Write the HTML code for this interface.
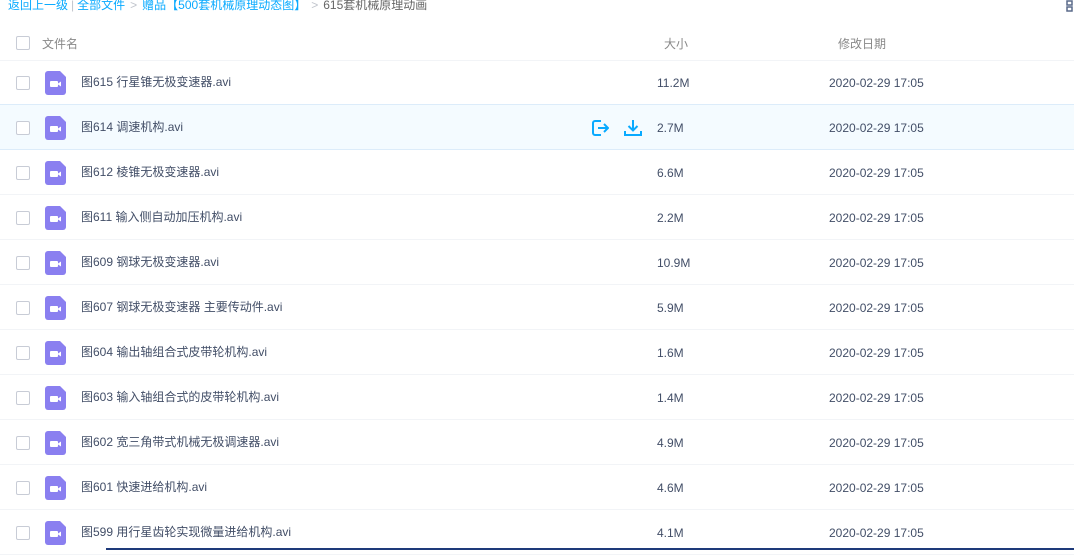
<!DOCTYPE html><html><head><meta charset="utf-8"><style>
body{margin:0;width:1074px;height:550px;overflow:hidden;background:#fff;font-family:"Liberation Sans","Noto Sans CJK SC",sans-serif;font-size:12px;color:#424e67;position:relative}
.bc{position:absolute;top:-4px;left:8px;color:#09aaff;white-space:nowrap}
.bc .g{color:#c0c4cc;margin:0 5px}.bc .d{color:#666}
.hdr{position:absolute;top:22px;left:0;width:1074px;height:38px;border-bottom:1px solid #f2f4f7;color:#888}
.cb{position:absolute;left:16px;width:12px;height:12px;border:1px solid #c8ccd6;border-radius:2px;background:#fff}
.row{position:absolute;left:0;width:1074px;height:44px;border-bottom:1px solid #f2f4f7}
.row.h{background:#f4fbff;border-bottom:1px solid #dcecfa;border-top:1px solid #dcecfa;top:-1px}
.ic{position:absolute;left:45px;top:11px;width:21px;height:24px}
.nm{position:absolute;left:81px;top:13px}
.sz{position:absolute;left:657px;top:16px}
.dt{position:absolute;left:829px;top:16px}
</style></head><body>
<div class="bc">返回上一级<span style="color:#c0c4cc;margin:0 3px">|</span>全部文件<span class="g">&gt;</span>赠品【500套机械原理动态图】<span class="g">&gt;</span><span class="d">615套机械原理动画</span></div>
<svg style="position:absolute;left:1066px;top:0" width="8" height="12"><rect x="1" y="1" width="5" height="4" fill="none" stroke="#5a6a8a" stroke-width="1.5"/><rect x="1" y="7" width="5" height="4" fill="none" stroke="#5a6a8a" stroke-width="1.5"/></svg>
<div class="hdr"><div class="cb" style="top:14px"></div><span style="position:absolute;left:42px;top:13px">文件名</span><span style="position:absolute;left:664px;top:13px">大小</span><span style="position:absolute;left:838px;top:13px">修改日期</span></div>
<div id="rows"></div>
<div style="position:absolute;left:106px;top:548px;width:968px;height:2px;background:#1e3a7a"></div>
<script>
var d=[["图615 行星锥无极变速器.avi","11.2M"],["图614 调速机构.avi","2.7M"],["图612 棱锥无极变速器.avi","6.6M"],["图611 输入侧自动加压机构.avi","2.2M"],["图609 钢球无极变速器.avi","10.9M"],["图607 钢球无极变速器 主要传动件.avi","5.9M"],["图604 输出轴组合式皮带轮机构.avi","1.6M"],["图603 输入轴组合式的皮带轮机构.avi","1.4M"],["图602 宽三角带式机械无极调速器.avi","4.9M"],["图601 快速进给机构.avi","4.6M"],["图599 用行星齿轮实现微量进给机构.avi","4.1M"]];
var h="";d.forEach(function(r,i){var t=60+45*i;h+='<div class="row'+(i==1?' h':'')+'" style="top:'+(i==1?t-1:t)+'px"><div class="cb" style="top:16px"></div><svg class="ic" viewBox="0 0 21 24"><path d="M3 0H15L21 6V21a3 3 0 0 1-3 3H3a3 3 0 0 1-3-3V3a3 3 0 0 1 3-3z" fill="#8a7ff0"/><rect x="5" y="10" width="8" height="6" rx="1" fill="#fff"/><path d="M13 12.5L16 10.5V15.5L13 13.5z" fill="#fff"/></svg><span class="nm">'+r[0]+'</span>'+(i==1?'<svg style="position:absolute;left:591px;top:14px" width="18" height="18" viewBox="0 0 18 18"><path d="M10 2H4a2 2 0 0 0-2 2v10a2 2 0 0 0 2 2h6M7 9h10M13 5l4 4-4 4" fill="none" stroke="#09aaff" stroke-width="2"/></svg><svg style="position:absolute;left:624px;top:14px" width="18" height="18" viewBox="0 0 18 18"><path d="M9 1v10M4.5 7l4.5 4.5L13.5 7M1 12v4h16v-4" fill="none" stroke="#09aaff" stroke-width="2"/></svg>':'')+'<span class="sz">'+r[1]+'</span><span class="dt">2020-02-29 17:05</span></div>';});
document.getElementById("rows").innerHTML=h;
</script>
</body></html>
